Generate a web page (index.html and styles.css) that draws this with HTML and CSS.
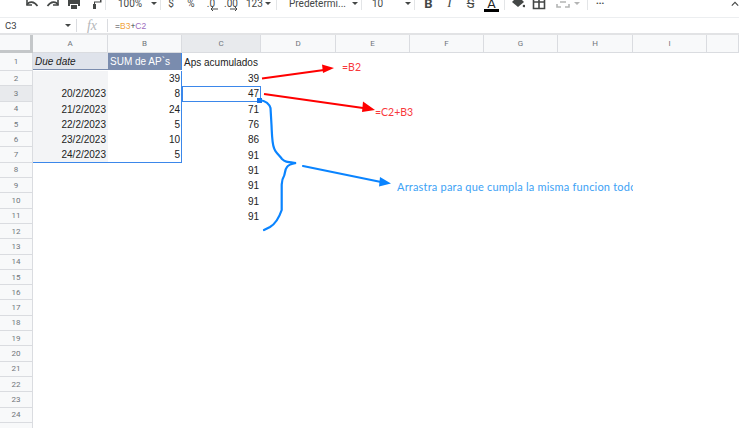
FILE: index.html
```html
<!DOCTYPE html>
<html>
<head>
  <title>Aps acumulados</title>
  <link rel="stylesheet" href="styles.css">
</head>
<body>

<div class="toolbar">
  <span class="btn"><svg viewBox="0 0 14 14" class="ico"><path d="M2 9 C4 5 9 5 12.5 10" /><path d="M2 3 V9 H7" /></svg></span>
  <span class="btn"><svg viewBox="0 0 14 14" class="ico"><path d="M12 9 C10 5 5 5 1.5 10" /><path d="M12 3 V9 H7" /></svg></span>
  <span class="btn"><svg viewBox="0 0 14 14" class="ico-fill"><path d="M3 0 H11 V3 H3 Z M1 4 H13 V10 H11 V8 H3 V10 H1 Z M4 9 H10 V13 H4 Z" /></svg></span>
  <span class="btn"><svg viewBox="0 0 14 14" class="ico-fill"><path d="M2 0 H11 V4 H2 Z M12 2 H13.5 V6.5 H7 V8 H8 V13 H5 V8 H6 V5.5 H12 Z" /></svg></span>
  <span class="sep"></span>
  <span class="drop zoom">100%<i class="caret"></i></span>
  <span class="sep"></span>
  <span class="btn small">$</span>
  <span class="btn small">%</span>
  <span class="btn small">.0<svg viewBox="0 0 8 4" class="tiny"><path d="M8 2 H2 M3 0 L1 2 L3 4" /></svg></span>
  <span class="btn small">.00<svg viewBox="0 0 8 4" class="tiny"><path d="M0 2 H6 M5 0 L7 2 L5 4" /></svg></span>
  <span class="drop num">123<i class="caret"></i></span>
  <span class="sep"></span>
  <span class="drop font">Predetermi...<i class="caret"></i></span>
  <span class="sep"></span>
  <span class="drop size">10<i class="caret"></i></span>
  <span class="sep"></span>
  <span class="btn fmt bold">B</span>
  <span class="btn fmt ital">I</span>
  <span class="btn fmt strike">S</span>
  <span class="btn fmt color">A</span>
  <span class="sep color-sep"></span>
  <span class="btn"><svg viewBox="0 0 14 14" class="ico-fill"><path d="M7 0 L13 6 L7 11 L1 6 Z" /><circle cx="13" cy="10" r="1.3" /></svg></span>
  <span class="btn"><svg viewBox="0 0 14 14" class="ico"><path d="M1.5 0 V12.5 H12.5 V0 M7 0 V12.5 M1.5 6 H12.5" /></svg></span>
  <span class="btn merge"><svg viewBox="0 0 14 14" class="ico"><path d="M1 1 V4 M13 1 V4 M1 8 V11 H5 M13 8 V11 H9 M4 6 H10" /></svg><i class="caret"></i></span>
  <span class="sep"></span>
  <span class="more">•••</span>
  <svg viewBox="0 0 10 10" class="collapse"><path d="M1 7 L5 3 L9 7" /></svg>
</div>

<div class="formula">
  <span class="namebox">C3<i class="caret"></i></span>
  <span class="fsep"></span>
  <span class="fx">fx</span>
  <span class="fsep"></span>
  <span class="ftext">=<b class="ref-b">B3</b>+<b class="ref-c">C2</b></span>
</div>

<div class="sheet">
  <div class="row head">
    <div class="corner"></div>
    <div class="col">A</div><div class="col">B</div><div class="col active">C</div><div class="col">D</div><div class="col">E</div><div class="col">F</div><div class="col">G</div><div class="col">H</div><div class="col">I</div><div class="col"></div>
  </div>
  <div class="row first">
    <div class="rn">1</div>
    <div class="cell a1">Due date</div><div class="cell b1">SUM de AP`s</div><div class="cell c">Aps acumulados</div>
  </div>
  <div class="row"><div class="rn">2</div><div class="cell shade"></div><div class="cell r rb">39</div><div class="cell r">39</div></div>
  <div class="row"><div class="rn active">3</div><div class="cell shade r">20/2/2023</div><div class="cell r rb">8</div><div class="cell r sel">47<span class="handle"></span></div></div>
  <div class="row"><div class="rn">4</div><div class="cell shade r">21/2/2023</div><div class="cell r rb">24</div><div class="cell r">71</div></div>
  <div class="row"><div class="rn">5</div><div class="cell shade r">22/2/2023</div><div class="cell r rb">5</div><div class="cell r">76</div></div>
  <div class="row"><div class="rn">6</div><div class="cell shade r">23/2/2023</div><div class="cell r rb">10</div><div class="cell r">86</div></div>
  <div class="row"><div class="rn">7</div><div class="cell shade r last">24/2/2023</div><div class="cell r rb last">5</div><div class="cell r">91</div></div>
  <div class="row"><div class="rn">8</div><div class="cell"></div><div class="cell"></div><div class="cell r">91</div></div>
  <div class="row"><div class="rn">9</div><div class="cell"></div><div class="cell"></div><div class="cell r">91</div></div>
  <div class="row"><div class="rn">10</div><div class="cell"></div><div class="cell"></div><div class="cell r">91</div></div>
  <div class="row"><div class="rn">11</div><div class="cell"></div><div class="cell"></div><div class="cell r">91</div></div>
  <div class="row"><div class="rn">12</div></div>
  <div class="row"><div class="rn">13</div></div>
  <div class="row"><div class="rn">14</div></div>
  <div class="row"><div class="rn">15</div></div>
  <div class="row"><div class="rn">16</div></div>
  <div class="row"><div class="rn">17</div></div>
  <div class="row"><div class="rn">18</div></div>
  <div class="row"><div class="rn">19</div></div>
  <div class="row"><div class="rn">20</div></div>
  <div class="row"><div class="rn">21</div></div>
  <div class="row"><div class="rn">22</div></div>
  <div class="row"><div class="rn">23</div></div>
  <div class="row"><div class="rn">24</div></div>
  <div class="row"><div class="rn"></div></div>

  <!-- drawn on top of the screenshot -->
  <svg class="marks" viewBox="0 0 739 393">
    <g class="red">
      <path d="M262 43.5 L324 35" />
      <path d="M264 59 L363 73" />
    </g>
    <path class="red-head" d="M322 29.5 L334 33 L323 38 Z" />
    <path class="red-head" d="M363 66.5 L375 75 L362 77 Z" />
    <path class="blue" d="M260 65 C265 66 269 68 270.5 73 L271.5 90 C272 100 272 108 274 113 C275 117 279 120 282 124 C285 127 287 127 296 128 C291 129 288 130 287 132 C285 134 285 139 284 141 C282 144 282 146 281.7 150 L281.7 175 C279 183 275 189 270 192 L264 195" />
    <path class="blue thick" d="M303 131 L381 147" />
    <path class="blue-head" d="M380 142 L391 148.5 L379 151.5 Z" />
  </svg>
  <span class="note red-note b2">=B2</span>
  <span class="note red-note c2">=C2+B3</span>
  <span class="note blue-note">Arrastra para que cumpla la misma funcion todo</span>
</div>

</body>
</html>
```

FILE: styles.css
```css
body {
  margin: 0;
  width: 739px;
  height: 428px;
  overflow: hidden;
  background: white;
  font-family: "Liberation Sans", Arial, sans-serif;
}

/* toolbar, cut off at the top of the window */
.toolbar {
  display: flex;
  align-items: center;
  box-sizing: border-box;
  height: 17px;
  padding: 0 0 11px 21px;
  overflow: hidden;
  position: relative;
  font-family: Roboto, sans-serif;
  font-size: 10px;
  color: #444746;
}

.btn {
  display: flex;
  align-items: center;
  justify-content: center;
  flex: none;
  width: 21px;
  height: 16px;
}

.btn.small {
  width: 20px;
  position: relative;
}

.ico {
  width: 14px;
  height: 14px;
  fill: none;
  stroke: #444746;
  stroke-width: 1.6;
}

.ico-fill {
  width: 14px;
  height: 14px;
  fill: #444746;
}

.tiny {
  position: absolute;
  right: 3px;
  top: 12px;
  width: 8px;
  height: 4px;
  fill: none;
  stroke: #444746;
}

.sep {
  flex: none;
  width: 1px;
  height: 14px;
  background: #e3e5e7;
}

.drop {
  display: flex;
  align-items: center;
  flex: none;
  height: 16px;
  box-sizing: border-box;
}

.zoom {
  width: 53px;
  margin-left: 1px;
  padding-left: 11px;
  gap: 9px;
}

.num {
  width: 35px;
  padding-left: 5px;
  gap: 2px;
}

.font {
  width: 84px;
  padding-left: 12px;
  gap: 6px;
  white-space: nowrap;
}

.size {
  width: 52px;
  padding-left: 10px;
  gap: 22px;
}

.caret {
  flex: none;
  width: 0;
  height: 0;
  border-left: 3.5px solid transparent;
  border-right: 3.5px solid transparent;
  border-top: 3.5px solid #444746;
}

.fmt {
  font-size: 13px;
}

.bold {
  margin-left: 3px;
  font-weight: bold;
}

.ital {
  font-style: italic;
  font-family: "Liberation Serif", serif;
}

.strike {
  text-decoration: line-through;
}

.color {
  position: relative;
  color: #222;
}

.color::after {
  content: "";
  position: absolute;
  left: 3px;
  right: 3px;
  top: 14px;
  height: 3px;
  background: black;
}

.color-sep {
  margin-left: 2px;
  margin-right: 2px;
}

.merge {
  width: 38px;
  gap: 4px;
  opacity: 0.4;
}

.more {
  margin-left: 8px;
  font-size: 8px;
  letter-spacing: 0;
}

.collapse {
  position: absolute;
  right: 0;
  top: 0;
  width: 8px;
  height: 8px;
  fill: none;
  stroke: #444746;
  stroke-width: 1.4;
}

/* formula bar */
.formula {
  display: flex;
  align-items: center;
  height: 15px;
  border-top: 1px solid #eceef0;
  border-bottom: 2px solid #e2e3e5;
  font-size: 8.5px;
  color: #3c4043;
}

.namebox {
  display: flex;
  align-items: center;
  justify-content: space-between;
  box-sizing: border-box;
  width: 76px;
  padding: 0 5px;
  font-family: Roboto, sans-serif;
  font-size: 9.5px;
}

.fsep {
  width: 1px;
  height: 13px;
  background: #dadce0;
}

.fx {
  width: 30px;
  text-align: center;
  font-family: "Liberation Serif", serif;
  font-style: italic;
  font-size: 14px;
  color: #b5b7ba;
}

.ftext {
  margin-left: 7px;
}

.ftext b {
  font-weight: normal;
}

.ref-b {
  color: #f2a33a;
}

.ref-c {
  color: #9c6cc0;
}

/* sheet */
.sheet {
  position: relative;
  font-size: 10px;
  color: #222;
}

.row {
  display: grid;
  grid-template-columns: 33px 75px 74px 79px 75px 74px 74px 74px 75px 74px 32px;
  height: 15.3px;
}

.row.head {
  height: 18px;
}

.row.first {
  height: 18px;
}

.corner {
  box-sizing: border-box;
  background: #f8f9fa;
  border-right: 3px solid #c4c7c9;
  border-bottom: 3px solid #c4c7c9;
}

.col {
  box-sizing: border-box;
  display: flex;
  align-items: center;
  justify-content: center;
  background: #f8f9fa;
  border-right: 1px solid #dadce0;
  border-bottom: 1px solid #dadce0;
  font-family: Roboto, sans-serif;
  font-size: 8px;
  color: #70757a;
}

.col.active {
  background: #e8eaed;
}

.rn {
  box-sizing: border-box;
  display: flex;
  align-items: center;
  justify-content: center;
  background: #f8f9fa;
  border-right: 1px solid #dadce0;
  border-bottom: 1px solid #dadce0;
  font-family: Roboto, sans-serif;
  font-size: 8px;
  color: #70757a;
}

.rn.active {
  background: #e8eaed;
}

.cell {
  box-sizing: border-box;
  display: flex;
  align-items: center;
  padding: 0 2px;
  white-space: nowrap;
  position: relative;
}

.cell.r {
  justify-content: flex-end;
}

.a1 {
  margin-bottom: 1px;
  background: #dfe3eb;
  border-bottom: 1px solid #7a8cae;
  font-style: italic;
}

.b1 {
  margin-bottom: 1px;
  background: #7a8cae;
  color: white;
  box-shadow: inset -1px 0 #3b87ea;
}

.c {
  padding-top: 1px;
}

.shade {
  background: #f3f4f6;
}

.rb {
  box-shadow: inset -1px 0 #3b87ea;
}

.last {
  border-bottom: 1px solid #3b87ea;
}

.sel {
  border: 1px solid #3b87ea;
  padding: 0 1px;
}

.handle {
  position: absolute;
  right: -2px;
  bottom: -2px;
  width: 5px;
  height: 5px;
  background: #1a73e8;
}

/* arrows and notes */
.marks {
  position: absolute;
  left: 0;
  top: 0;
  width: 739px;
  height: 393px;
  fill: none;
}

.red path {
  stroke: #ff0000;
  stroke-width: 2;
}

.red-head {
  fill: #ff0000;
}

.blue {
  stroke: #0a84ff;
  stroke-width: 2.2;
  stroke-linecap: round;
}

.blue-head {
  fill: #0a84ff;
}

.note {
  position: absolute;
  font-family: Lato, sans-serif;
  white-space: nowrap;
}

.red-note {
  font-size: 10.5px;
  color: #f8383c;
}

.b2 {
  left: 342px;
  top: 26px;
}

.c2 {
  left: 375px;
  top: 71px;
}

.blue-note {
  left: 397px;
  top: 145px;
  width: 236px;
  overflow: hidden;
  font-size: 11px;
  letter-spacing: 0.2px;
  color: #3da2f5;
}
```
